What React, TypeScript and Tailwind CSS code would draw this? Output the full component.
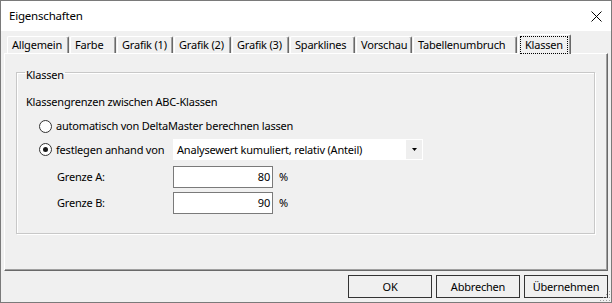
import React from "react";

const tabs: { label: string; w: string }[] = [
  { label: "Allgemein", w: "w-[62px]" },
  { label: "Farbe", w: "w-[46px]" },
  { label: "Grafik (1)", w: "w-[56px]" },
  { label: "Grafik (2)", w: "w-[57px]" },
  { label: "Grafik (3)", w: "w-[57px]" },
  { label: "Sparklines", w: "w-[65px]" },
  { label: "Vorschau", w: "w-[56px]" },
  { label: "Tabellenumbruch", w: "w-[104px]" },
];

function Radio({ checked }: { checked?: boolean }) {
  return (
    <span className="w-[13px] h-[13px] rounded-full border border-[#333333] bg-white flex items-center justify-center shrink-0">
      {checked && <span className="w-[5px] h-[5px] rounded-full bg-[#1a1a1a]" />}
    </span>
  );
}

function NumField({ label, value }: { label: string; value: string }) {
  return (
    <div className="flex items-center h-[22px]">
      <span className="ml-[32px] w-[116px]">{label}</span>
      <div className="w-[100px] h-[22px] border border-[#7a7a7a] bg-white flex items-center justify-end pr-[2px]">
        {value}
      </div>
      <span className="ml-[6px]">%</span>
    </div>
  );
}

export default function App() {
  return (
    <div className="relative w-[612px] h-[303px] bg-[#f0f0f0] border border-[#7a7a7a] flex flex-col overflow-hidden text-[11px] tracking-[-0.2px] leading-[16px] text-black font-['Noto_Sans',sans-serif] whitespace-nowrap">
      {/* Title bar */}
      <div className="h-[30px] bg-white flex items-center justify-between pl-[8px] pr-[8px] shrink-0">
        <span className="text-[11.5px]">Eigenschaften</span>
        <svg width="11" height="11" viewBox="0 0 11 11" className="mr-[1px]">
          <path d="M0.5 0.5 L10.5 10.5 M10.5 0.5 L0.5 10.5" stroke="#000" strokeWidth="1" fill="none" />
        </svg>
      </div>

      {/* Tabs */}
      <div className="h-[22px] flex items-end pl-[6px] shrink-0">
        {tabs.map((t) => (
          <div
            key={t.label}
            className={`${t.w} h-[17px] mr-[1px] border-t border-l border-r border-t-white border-l-white border-r-[#696969] shadow-[inset_-1px_0_0_#a0a0a0] rounded-tl-[2px] rounded-tr-[2px] flex items-center pl-[4px]`}
          >
            {t.label}
          </div>
        ))}
        <div className="relative z-10 w-[53px] h-[20px] -mb-px bg-[#f0f0f0] border-t border-l border-r border-t-white border-l-white border-r-[#696969] shadow-[inset_-1px_0_0_#a0a0a0] rounded-tl-[2px] rounded-tr-[2px] flex pt-[1px] pl-[1px] pr-[2px]">
          <div className="flex-1 h-[18px] border border-dotted border-black flex items-center pl-[4px]">
            Klassen
          </div>
        </div>
      </div>

      {/* Panel */}
      <div className="mx-[3px] h-[218px] shrink-0 border border-t-white border-l-white border-r-[#696969] border-b-[#696969] shadow-[inset_-1px_-1px_0_#a0a0a0] flex flex-col">
        <fieldset className="ml-[11px] mt-[7px] w-[579px] border border-[#c8c8c8] shadow-[inset_1px_1px_0_#ffffff,1px_1px_0_#ffffff] pl-[8px] pb-[19px]">
          <legend className="px-[1px] pt-[6px] leading-[16px]">Klassen</legend>
          <div className="ml-[1px] mt-[11px] h-[16px]">Klassengrenzen zwischen ABC-Klassen</div>
          <div className="mt-[6px] h-[20px] flex items-center">
            <span className="ml-[14px]">
              <Radio />
            </span>
            <span className="ml-[4px]">automatisch von DeltaMaster berechnen lassen</span>
          </div>
          <div className="mt-[3px] h-[21px] flex items-center">
            <span className="ml-[14px]">
              <Radio checked />
            </span>
            <span className="ml-[4px] w-[117px]">festlegen anhand von</span>
            <div className="w-[250px] h-[21px] bg-white flex p-[1px]">
              <span className="flex-1 pl-[3px] flex items-center">
                Analysewert kumuliert, relativ (Anteil)
              </span>
              <span className="w-[16px] bg-[#efefef] flex items-center justify-center">
                <svg width="5" height="3" viewBox="0 0 5 3">
                  <polygon points="0,0 5,0 2.5,3" fill="#000" />
                </svg>
              </span>
            </div>
          </div>
          <div className="mt-[6px]">
            <NumField label="Grenze A:" value="80" />
          </div>
          <div className="mt-[4px]">
            <NumField label="Grenze B:" value="90" />
          </div>
        </fieldset>
      </div>

      {/* Buttons */}
      <div className="flex justify-end gap-[4px] pt-[4px] pr-[3px]">
        {["OK", "Abbrechen", "Übernehmen"].map((b) => (
          <div
            key={b}
            className="w-[84px] h-[23px] border border-[#333333] bg-[#f0f0f0] flex items-center justify-center"
          >
            {b}
          </div>
        ))}
      </div>

      {/* Size grip */}
      <svg width="12" height="12" viewBox="0 0 12 12" className="absolute right-0 bottom-0">
        {[
          [10, 2], [10, 5], [7, 5], [10, 8], [7, 8], [4, 8], [10, 11], [7, 11], [4, 11], [1, 11],
        ].map(([x, y], i) => (
          <rect key={i} x={x} y={y - 1} width="1" height="1" fill="#a0a0a0" />
        ))}
      </svg>
    </div>
  );
}
